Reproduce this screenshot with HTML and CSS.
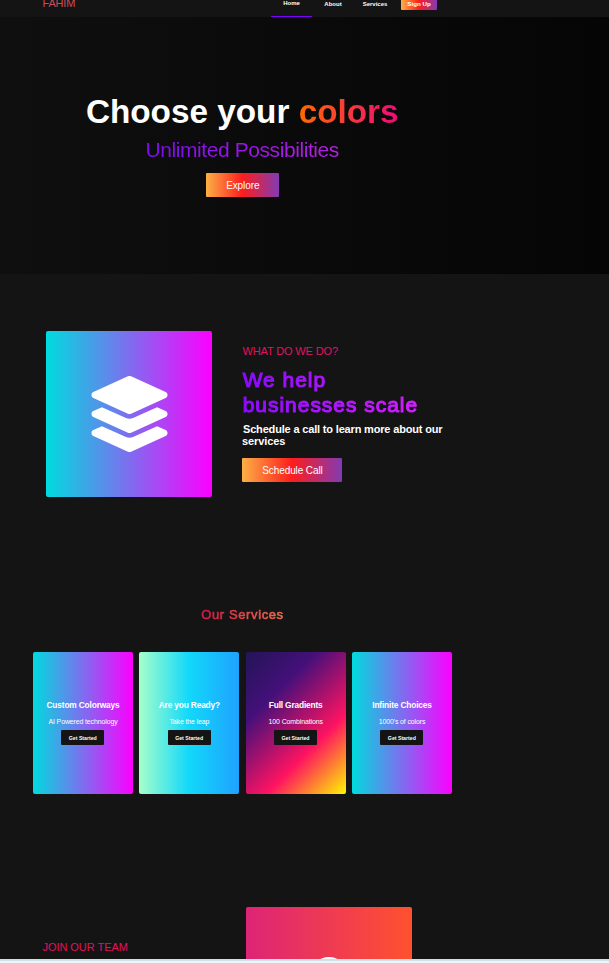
FILE: index.html
```html
<!DOCTYPE html>
<html lang="en">
<head>
<meta charset="utf-8">
<title>FAHIM</title>
<link rel="stylesheet" href="styles.css">
</head>
<body>
<nav class="navbar">
  <span class="logo">FAHIM</span>
  <ul class="menu">
    <li class="menu-item active">Home</li>
    <li class="menu-item about">About</li>
    <li class="menu-item services-link">Services</li>
    <li class="signup">Sign Up</li>
  </ul>
</nav>
<header class="hero">
  <div class="hero-content">
    <h1>Choose your <span class="colors">colors</span></h1>
    <p class="tagline">Unlimited Possibilities</p>
    <button class="button explore">Explore</button>
  </div>
</header>
<section class="about-section">
  <div class="tile cyan">
    <svg class="layers" viewBox="0 0 512 512" fill="#fff"><path d="M12.41 148.02l232.94 105.67c6.8 3.09 14.49 3.09 21.29 0l232.94-105.67c16.55-7.51 16.55-32.52 0-40.03L266.65 2.31a25.607 25.607 0 0 0-21.29 0L12.41 107.98c-16.55 7.51-16.55 32.53 0 40.04zm487.18 88.28l-58.09-26.33-161.64 73.27c-7.56 3.43-15.59 5.17-23.86 5.17s-16.29-1.74-23.86-5.17L70.51 209.97l-58.1 26.33c-16.55 7.5-16.55 32.5 0 40l232.94 105.59c6.8 3.08 14.49 3.08 21.29 0L499.59 276.3c16.55-7.5 16.55-32.5 0-40zm0 127.8l-57.87-26.23-161.86 73.37c-7.56 3.43-15.59 5.17-23.86 5.17s-16.29-1.74-23.86-5.17L70.29 337.87 12.41 364.1c-16.55 7.5-16.55 32.5 0 40l232.94 105.59c6.8 3.08 14.49 3.08 21.29 0L499.59 404.1c16.55-7.5 16.55-32.5 0-40z"/></svg>
  </div>
  <div class="about-copy">
    <p class="eyebrow">WHAT DO WE DO?</p>
    <h2>We help<br>businesses scale</h2>
    <p class="lead"><span class="lead-first">Schedule a call to learn more about our</span><br>services</p>
    <button class="button call">Schedule Call</button>
  </div>
</section>
<section class="services">
  <h3><span class="services-title">Our Services</span></h3>
  <div class="cards">
    <article class="card cyan"><h4>Custom Colorways</h4><p>AI Powered technology</p><button class="start">Get Started</button></article>
    <article class="card mint"><h4>Are you Ready?</h4><p>Take the leap</p><button class="start">Get Started</button></article>
    <article class="card sunset"><h4>Full Gradients</h4><p>100 Combinations</p><button class="start">Get Started</button></article>
    <article class="card cyan"><h4>Infinite Choices</h4><p>1000's of colors</p><button class="start">Get Started</button></article>
  </div>
</section>
<section class="team">
  <p class="eyebrow join">JOIN OUR TEAM</p>
  <div class="team-tile">
    <svg class="person" viewBox="0 0 76 76" fill="#fff"><circle cx="38" cy="19" r="19"/></svg>
  </div>
</section>
<footer class="edge"></footer>
</body>
</html>
```
FILE: styles.css
```css
* { box-sizing: border-box; margin: 0; padding: 0; }
html, body { height: 963px; overflow: hidden; }
body {
  display: flex;
  flex-direction: column;
  background: #141414;
  color: #fff;
  font-family: "Liberation Sans", Arial, sans-serif;
  white-space: nowrap;
}
button { border: 0; color: #fff; font-family: inherit; display: block; text-align: center; }

.navbar { flex: none; height: 17px; display: flex; align-items: flex-start; padding-left: 42.5px; }
.logo {
  width: 228.5px;
  height: 10px;
  line-height: 7px;
  font-size: 11px;
  letter-spacing: -0.2px;
  color: #cc4c59;
}
.menu { display: flex; list-style: none; font-size: 6px; font-weight: bold; line-height: 8px; height: 17px; }
.menu-item { height: 17px; text-align: center; }
.active { width: 41px; border-bottom: 1.5px solid #8000ff; margin-top: -1px; height: 18px; }
.about { width: 42px; }
.services-link { width: 42px; }
.signup {
  width: 36px;
  height: 14px;
  margin: -4px 0 0 5px;
  padding-top: 4px;
  border-radius: 1px;
  text-align: center;
  font-size: 6.2px;
  background: linear-gradient(to right, #fcb045, #fd1d1d 50%, #833ab4);
}

.hero { flex: none; height: 257px; padding-top: 75px; background: linear-gradient(to right, #0f0f0f, #050505); }
.hero-content { width: 484.5px; display: flex; flex-direction: column; align-items: center; }
h1 { font-size: 33.3px; line-height: 40px; height: 45px; }
.colors {
  color: transparent;
  background: linear-gradient(to right, #ff6a00, #ee0979);
  -webkit-background-clip: text;
  background-clip: text;
}
.tagline {
  font-size: 21px;
  line-height: 26px;
  height: 36px;
  letter-spacing: -0.42px;
  color: transparent;
  background: linear-gradient(to right, #7a0cf0, #b81fe0);
  -webkit-background-clip: text;
  background-clip: text;
}
.button {
  height: 24px;
  padding: 1px 0 0 1px;
  font-size: 10px;
  line-height: 24px;
  letter-spacing: -0.1px;
  border-radius: 1px;
  background: linear-gradient(to right, #fcb045, #fd1d1d 50%, #833ab4);
}
.explore { width: 73px; }

.about-section { flex: none; height: 296px; padding: 57px 0 0 46px; display: flex; gap: 30px; }
.tile { width: 166px; height: 166px; padding-left: 1px; border-radius: 2px; display: flex; align-items: center; justify-content: center; }
.cyan { background: linear-gradient(to right, #00dbde, #fc00ff); }
.layers { width: 77px; height: 76px; }
.about-copy { padding-top: 13px; }
.eyebrow { font-size: 11px; line-height: 14px; letter-spacing: -0.14px; color: #e0125f; }
.about-copy .eyebrow { padding-left: 0.5px; }
h2 {
  width: 200px;
  margin-top: 9px;
  padding-left: 0.7px;
  height: 55px;
  font-size: 21px;
  font-weight: normal;
  line-height: 25px;
  letter-spacing: 0.97px;
  -webkit-text-stroke: 1.1px transparent;
  color: transparent;
  background: linear-gradient(to right, #8a0aff, #dd22ff);
  -webkit-background-clip: text;
  background-clip: text;
}
.lead { font-size: 11px; font-weight: bold; line-height: 12px; height: 36px; padding-top: 1px; letter-spacing: -0.1px; }
.lead-first { padding-left: 1px; letter-spacing: -0.17px; }
.call { width: 100px; }

.services { flex: none; height: 337px; padding: 36px 0 0 33px; }
h3 { width: 419px; height: 46px; text-align: center; font-size: 13px; line-height: 17px; }
.services-title {
  letter-spacing: 0.6px;
  font-weight: normal;
  -webkit-text-stroke: 0.6px transparent;
  color: transparent;
  background: linear-gradient(to right, #cf1845, #ef7050);
  -webkit-background-clip: text;
  background-clip: text;
}
.cards { display: grid; grid-template-columns: repeat(4, 100px); column-gap: 6.35px; }
.card { height: 142px; padding-top: 47px; border-radius: 2px; display: flex; flex-direction: column; align-items: center; }
.mint { background: linear-gradient(to right, #a6ffcb, #12d8fa 50%, #1fa2ff); }
.sunset { background: linear-gradient(135deg, #231557 0%, #44107a 29%, #ff1361 67%, #fff800 100%); }
.card h4 { font-size: 8.4px; line-height: 12px; height: 17px; letter-spacing: -0.18px; }
.card p { font-size: 7px; line-height: 12px; height: 14px; letter-spacing: -0.14px; }
.start { width: 43px; height: 15px; margin-right: 0.4px; border-radius: 1px; background: #141414; font-size: 5.2px; line-height: 16px; font-weight: bold; }

.team { flex: none; height: 52px; padding-left: 42px; display: flex; overflow: hidden; }
.join { width: 204px; padding: 33px 0 0 0.5px; letter-spacing: -0.05px; }
.team-tile {
  width: 166px;
  height: 166px;
  padding-top: 50px;
  display: flex;
  justify-content: center;
  border-radius: 2px;
  background: linear-gradient(to right, #dd2476, #ff512f);
}
.person { width: 76px; height: 76px; }
.edge { height: 4px; background: linear-gradient(#cfe0e8 50%, #edf5f8 50%); }
```
